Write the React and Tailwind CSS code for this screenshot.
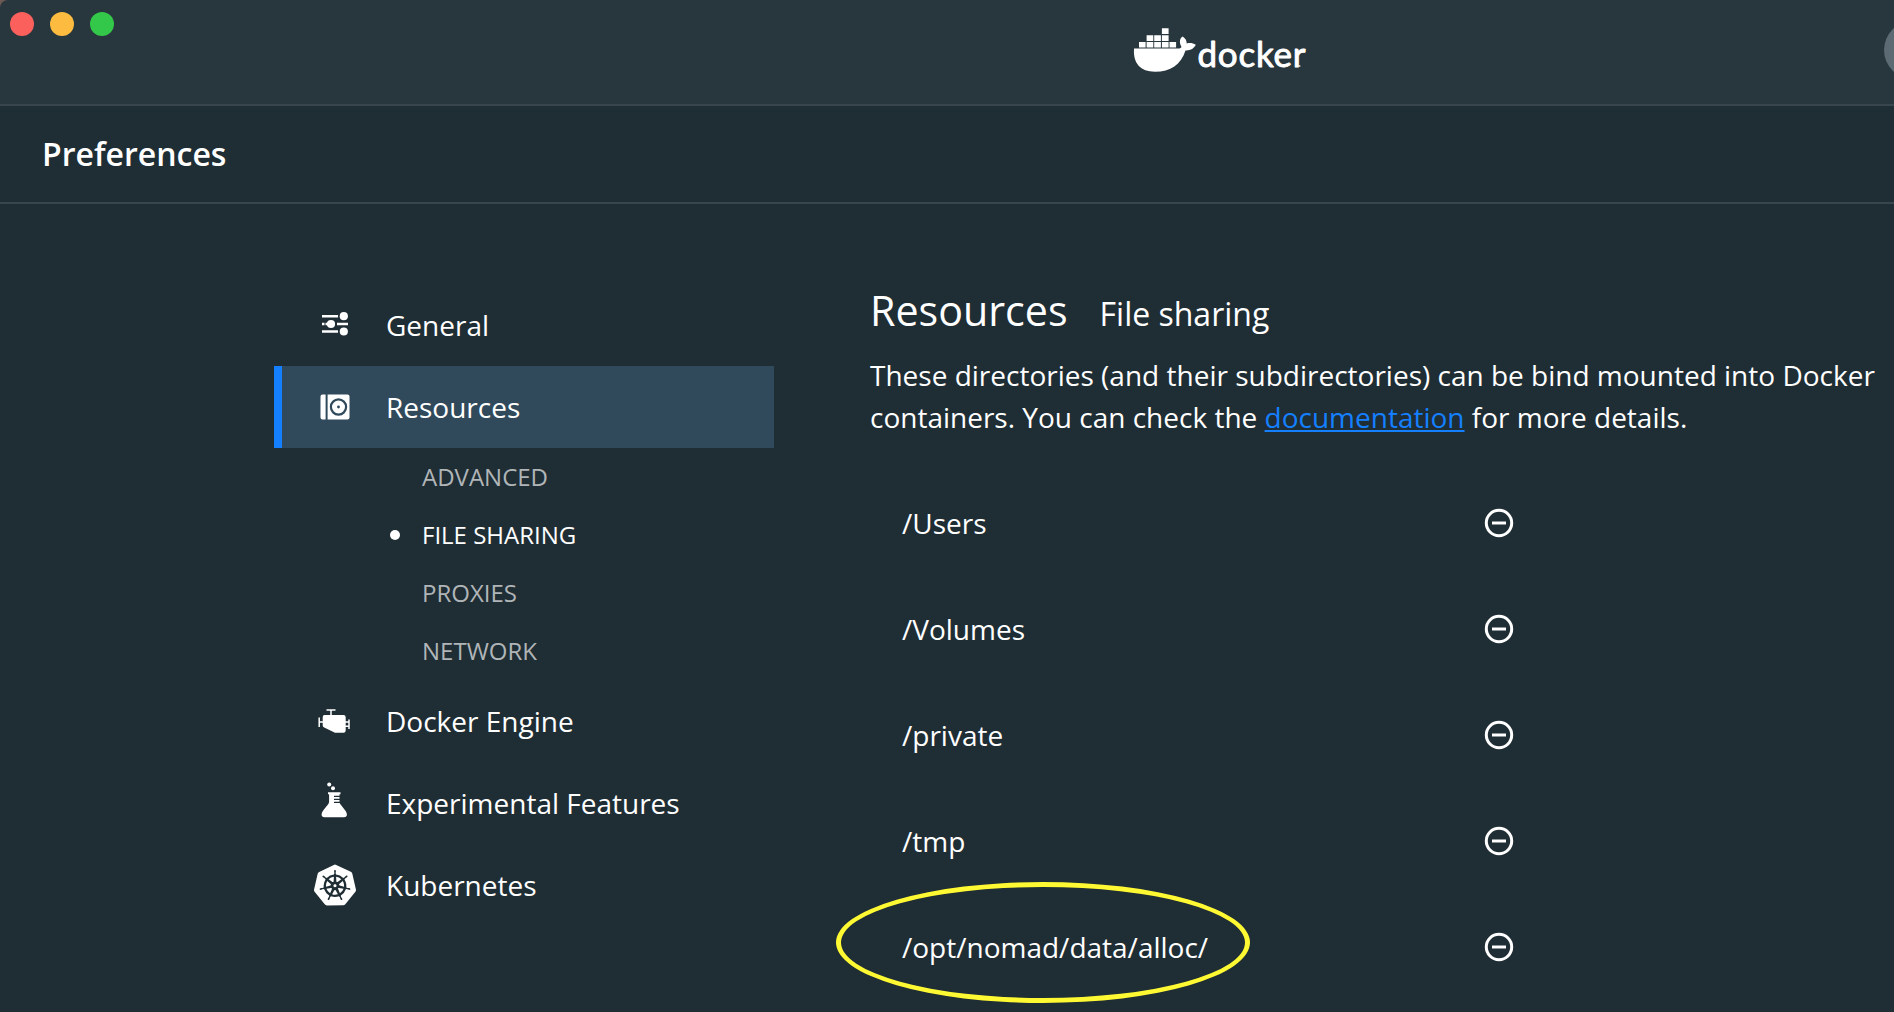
import React from "react";
import { SiKubernetes } from "react-icons/si";

function DockerLogo() {
  return (
    <svg width="176" height="52" viewBox="0 0 176 52" fill="#fff" role="img" aria-label="docker">
      <path d="M2 20.6H46C47.500 20.600 48.800 20 49.500 19C47 14.500 47.500 10.500 50.700 8.500C53.300 10.300 54.800 12.600 54.700 15.500C57.800 14.600 61 15 63.800 16.800C62 20.400 58.600 22.800 53.500 22.500C49 36.500 38.500 43.800 23 43.800C8.500 43.800 1 35.500 2 20.600Z" />
      <path d="M7 14h6.600v5.600H7zM14.600 14h6.700v5.600h-6.700zM22.200 14h6.700v5.600h-6.700zM29.900 14h6.700v5.600h-6.700zM37.500 14h6.600v5.600h-6.600zM14.600 7.200h6.700v5.700h-6.700zM22.200 7.200h6.700v5.700h-6.700zM29.900 7.200h6.700v5.700h-6.700zM29.900.3h6.700V6h-6.700z" />
      <text x="65.500" y="38.500" fontFamily="Lato, sans-serif" fontSize="35" textLength="108" stroke="#fff" strokeWidth="0.9" strokeLinejoin="round">docker</text>
      <circle cx="167.500" cy="38" r="1.100" opacity=".7" />
    </svg>
  );
}

function GeneralIcon() {
  return (
    <svg className="mb-0.5" width="28" height="24" viewBox="0 0 28 24" fill="#fff">
      <path d="M1 3h16v2.500H1zM1 10.700h2.500v2.500H1zM4.500 10.700h4v2.500h-4zM16 10.700h11v2.500H16zM1 18.300h16v2.500H1z" />
      <circle cx="22.800" cy="4.200" r="4.100" />
      <circle cx="10" cy="12" r="4.100" />
      <circle cx="22.800" cy="19.500" r="4.100" />
    </svg>
  );
}

function ResourcesIcon() {
  return (
    <svg className="mb-px" width="30" height="26" viewBox="0 0 30 26" fill="#fff">
      <path d="M2.500.5H5.600V25.500H2.500Q.5 25.500.5 23.500V2.500Q.5.500 2.500.5ZM7.600.5H27.500Q29.500.500 29.500 2.500V23.500Q29.500 25.500 27.500 25.500H7.600Z" />
      <circle cx="18.500" cy="13" r="7.600" stroke="#304a5c" strokeWidth="2.200" />
      <circle cx="18.500" cy="13" r="1.400" fill="#304a5c" />
    </svg>
  );
}

function EngineIcon() {
  return (
    <svg className="mr-0.5" width="32" height="26" viewBox="0 0 32 26" fill="#fff">
      <path d="M6.500 7H25.500Q27.700 7 27.700 9.200V22.500Q27.700 24.700 25.500 24.700H17L6.200 19.600Q4.700 18.900 4.700 17.500V9.200Q4.700 7 6.500 7Z" />
      <path d="M8.500 2H17.500M13 2V7M1.200 9.500V19M1.200 14H5M31 11.500V21M27 14H31M27 18.200H31" stroke="#fff" strokeWidth="1.500" fill="none" />
    </svg>
  );
}

function FlaskIcon() {
  return (
    <svg className="mb-1.5" width="28" height="36" viewBox="0 0 28 36" fill="#fff">
      <circle cx="8.200" cy="2.500" r="2" />
      <circle cx="12" cy="6.200" r="2" />
      <path d="M7 10.200H19.500V12.200H18.500V13.700H13V15H18.500V16.700H13V18H18.500V19.700H13V21H18.700Q19.100 22 20 23L25 29.500Q27.500 35 23 35.200H3.500Q-.5 35 1 30.500Q1.500 29 7 22.500Q8.100 21 8.100 19.500V12.200H7Z" />
    </svg>
  );
}

function RemoveIcon() {
  return (
    <svg width="30" height="30" viewBox="0 0 30 30" fill="none" stroke="#fff">
      <circle cx="15" cy="15" r="12.700" strokeWidth="3" />
      <path d="M8 15H22" strokeWidth="3" />
    </svg>
  );
}

function NavItem({ icon, label, active }) {
  return (
    <div className={`flex h-[82px] items-center border-l-8 text-[28px] ${active ? "border-[#1580ff] bg-[#304a5c]" : "border-transparent"}`}>
      <span className="flex w-[104px] items-center justify-center pl-0.5">{icon}</span>
      <span>{label}</span>
    </div>
  );
}

const sections = ["ADVANCED", "FILE SHARING", "PROXIES", "NETWORK"];
const folders = ["/Users", "/Volumes", "/private", "/tmp", "/opt/nomad/data/alloc/"];

export default function App() {
  return (
    <div className="flex h-[1012px] w-[1894px] flex-col overflow-hidden bg-[#1f2d34] font-['Open_Sans',sans-serif] text-white">
      <div className="shrink-0 bg-[#6d5a55]">
        <header className="relative flex h-[106px] overflow-hidden rounded-tl-lg border-b-2 border-[#39464d] bg-[#28363d]">
          <div className="flex gap-4 pt-3 pl-2.5">
            <span className="size-6 rounded-full bg-[#fc605c]" />
            <span className="size-6 rounded-full bg-[#fdbc40]" />
            <span className="size-6 rounded-full bg-[#34c84a]" />
          </div>
          <div className="ml-[1018px] pt-7">
            <DockerLogo />
          </div>
          <span className="absolute top-[21px] left-[1884px] size-[58px] rounded-full bg-[#5c6b73]" />
        </header>
      </div>
      <div className="flex h-[98px] shrink-0 items-center border-b-2 border-[#39464d] pl-[42px]">
        <h1 className="text-[32px] leading-[44px] font-semibold">Preferences</h1>
      </div>
      <main className="flex grow pl-[274px]">
        <nav className="w-[500px] pt-20">
          <NavItem icon={<GeneralIcon />} label="General" />
          <NavItem icon={<ResourcesIcon />} label="Resources" active />
          <ul>
            {sections.map((name) => (
              <li key={name} className={`flex h-[58px] items-center pl-[116px] text-[24px] ${name === "FILE SHARING" ? "text-white" : "text-[#b0b5b8]"}`}>
                <span className={`mr-[22px] size-2.5 rounded-full ${name === "FILE SHARING" ? "bg-white" : ""}`} />
                {name}
              </li>
            ))}
          </ul>
          <NavItem icon={<EngineIcon />} label="Docker Engine" />
          <NavItem icon={<FlaskIcon />} label="Experimental Features" />
          <NavItem icon={<SiKubernetes size={42} />} label="Kubernetes" />
        </nav>
        <section className="ml-24 w-[1024px] pt-[78px]">
          <div className="flex items-baseline gap-8">
            <h2 className="text-[41.2px] leading-[56px]">Resources</h2>
            <h3 className="text-[32px] leading-[56px]">File sharing</h3>
          </div>
          <p className="mt-[12px] text-[28px] leading-[42px]">
            These directories (and their subdirectories) can be bind mounted into Docker
            <br />
            containers. You can check the <a className="text-[#1580ff] underline">documentation</a> for more details.
          </p>
          <ul className="mt-[32px] text-[28px]">
            {folders.map((path) => (
              <li key={path} className="flex h-[106px] w-[644px] items-center justify-between pl-8">
                <span className="relative">
                  {path}
                  {path.startsWith("/opt") && (
                    <span className="absolute -top-[44px] -left-[66px] h-[121px] w-[414px] rounded-[50%] border-[5px] border-[#fff933]" />
                  )}
                </span>
                <RemoveIcon />
              </li>
            ))}
          </ul>
        </section>
      </main>
    </div>
  );
}
